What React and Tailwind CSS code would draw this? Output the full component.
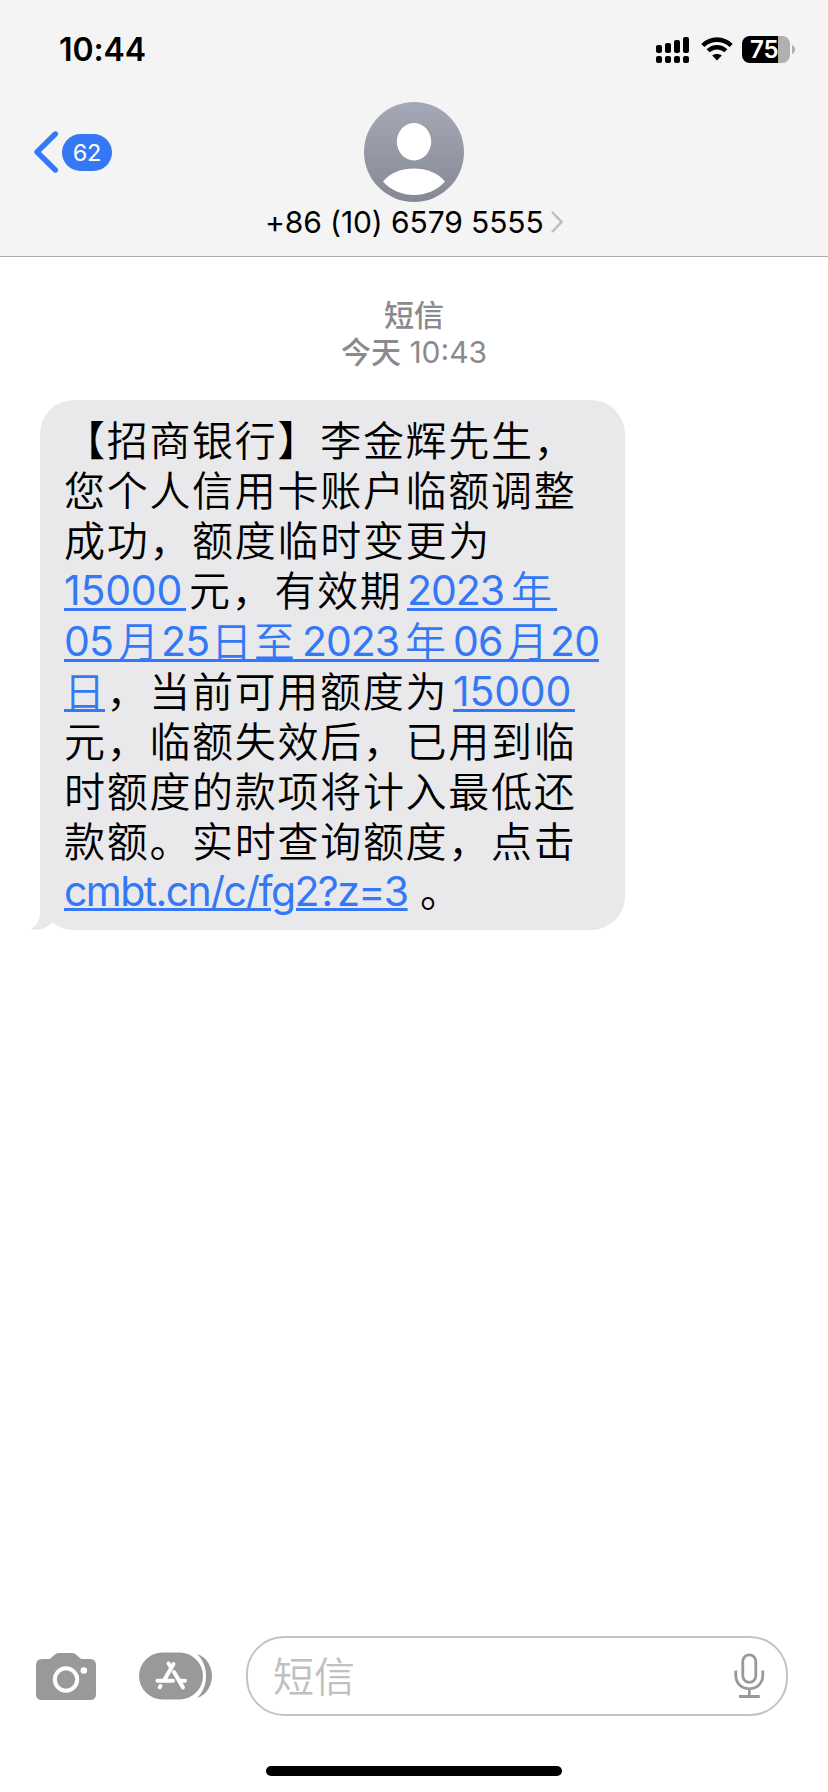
const latin = "font-['Inter','Noto_Sans_CJK_SC',sans-serif]";

function Line({ children }) {
  return <div className="flex h-[50.17px] whitespace-pre leading-[50px]">{children}</div>;
}

function Han({ className = "", children }) {
  return (
    <span
      className={`shrink-0 font-['Noto_Sans_CJK_SC_DemiLight','Noto_Sans_CJK_SC',sans-serif] text-[41px] leading-[46px] font-[350] tracking-[1.7px] ${className}`}
    >
      {children}
    </span>
  );
}

function Num({ className = "tracking-[-0.2px]", children }) {
  return <span className={`shrink-0 font-['Inter',sans-serif] text-[41px] ${className}`}>{children}</span>;
}

function Link({ className = "", children }) {
  return (
    <a className={`flex h-[46px] shrink-0 border-b-3 border-[#3478f6] text-[#3478f6] ${className}`}>{children}</a>
  );
}

function StatusBar() {
  return (
    <div className="flex h-[100px] items-start justify-between pt-[30px] pl-[59px] pr-[33px]">
      <span className="text-[32px] leading-[40px] font-semibold tracking-[-0.1px]">10:44</span>
      <div className="flex items-center pt-[6px]">
        <svg className="h-[27px] w-[34px]" viewBox="0 0 34 27">
          <rect x="0" y="9" width="6" height="8" rx="2" />
          <rect x="9" y="7" width="6" height="10" rx="2" />
          <rect x="18" y="4" width="6" height="13" rx="2" />
          <rect x="27" y="1" width="6" height="16" rx="2" />
          <rect x="0" y="20" width="6" height="7" rx="2" />
          <rect x="9" y="20" width="6" height="7" rx="2" />
          <rect x="18" y="20" width="6" height="7" rx="2" />
          <rect x="27" y="20" width="6" height="7" rx="2" />
        </svg>
        <svg className="ml-[11px] h-[27px] w-[32px]" viewBox="0 0 32 27">
          <path d="M0.3 7.9C9 -0.9 23 -0.9 31.7 7.9L28.6 11C21.5 4.2 10.5 4.2 3.4 11Z" />
          <path d="M5.6 13.2C11.4 7.5 20.6 7.5 26.4 13.2L23.3 16.3C19.2 12.4 12.8 12.4 8.7 16.3Z" />
          <path d="M11.2 19.500C13.9 17.500 18.1 17.500 20.8 19.500L16 24.500Z" />
        </svg>
        <div className="relative ml-[9px] flex h-[27px] w-[48px] overflow-hidden rounded-[8px] bg-[#b0b0b0]">
          <div className="h-full w-[36px] bg-black" />
          <span className="absolute top-0 left-[8px] text-[24px] leading-[27px] font-semibold text-white">75</span>
        </div>
        <svg className="ml-[2px] h-[9px] w-[3px]" viewBox="0 0 3 9">
          <path d="M0 0C4 1.500 4 7.500 0 9Z" fill="#b0b0b0" />
        </svg>
      </div>
    </div>
  );
}

function Header() {
  return (
    <header className="h-[257px] border-b border-[#adadad] bg-[#f4f4f4]">
      <StatusBar />
      <div className="grid grid-cols-[1fr_100px_1fr]">
        <div className="flex h-[104px] items-center pl-[33px]">
          <svg className="h-[44px] w-[26px]" viewBox="0 0 26 44" fill="none">
            <path d="M22.300 4L4 22L22.300 40" stroke="#3478f6" strokeWidth="5.400" strokeLinecap="round" strokeLinejoin="round" />
          </svg>
          <span className="ml-[3px] h-[37px] w-[50px] rounded-full bg-[#3478f6] text-center text-[23.500px] leading-[38px] tracking-[-0.2px] text-white">
            62
          </span>
        </div>
        <svg className="mt-[2px] size-[100px]" viewBox="0 0 100 100">
          <defs>
            <linearGradient id="avatar" x1="0" y1="0" x2="0" y2="1">
              <stop offset="0" stopColor="#a5a9b7" />
              <stop offset="1" stopColor="#858993" />
            </linearGradient>
          </defs>
          <circle cx="50" cy="50" r="50" fill="url(#avatar)" />
          <ellipse cx="50" cy="39.700" rx="17.200" ry="18.700" fill="#fff" />
          <path d="M19 79.500C33 62.200 67 62.200 81 79.500C65 97.500 35 97.500 19 79.500Z" fill="#fff" />
        </svg>
      </div>
      <div className="flex items-center pl-[265px]">
        <span className="w-[286px] text-[30px] leading-[36px] tracking-[-0.1px] whitespace-nowrap">+86 (10) 6579 5555</span>
        <svg className="h-[22px] w-[12px]" viewBox="0 0 12 22" fill="none">
          <path d="M1 1L10.500 11L1 21" stroke="#bcbcc0" strokeWidth="2.400" />
        </svg>
      </div>
    </header>
  );
}

function Message() {
  return (
    <div className="relative ml-[40px] h-[530px] w-[585px] rounded-[34px] bg-[#e9e9eb] pt-[15px] pl-[24px]">
      <svg className="absolute bottom-0 left-[-10px] h-[50px] w-[44px]" viewBox="0 0 44 50">
        <path d="M10 0V32C10 41 6 47 0 49C9 51.500 17 48 23 42.500C29 47.500 35 50 44 50V0Z" fill="#e9e9eb" />
        <path d="M0 50V49.500C9 51.500 17 48 23 42.500C29 47.500 35 50 44 50Z" fill="#fff" />
      </svg>
      <div className="relative">
        <Line><Han>【招商银行】李金辉先生，</Han></Line>
        <Line><Han>您个人信用卡账户临额调整</Han></Line>
        <Line><Han>成功，额度临时变更为</Han></Line>
        <Line>
          <Link className="w-[122px]"><Num>15000</Num></Link>
          <Han className="w-[221px] pl-[3px]">元，有效期</Han>
          <Link className="w-[150px]"><Num className="w-[104px] tracking-[-1px]">2023</Num><Han>年</Han></Link>
        </Line>
        <Line>
          <Link className="w-[535px]">
            <Num className="w-[54px] tracking-[-0.8px]">05</Num><Han className="w-[43px]">月</Han>
            <Num className="w-[50px] tracking-[-0.8px]">25</Num><Han className="w-[91px]">日至</Han>
            <Num className="w-[103px] tracking-[-1px]">2023</Num><Han className="w-[48px]">年</Han>
            <Num className="w-[54px] tracking-[-0.8px]">06</Num><Han className="w-[43px]">月</Han>
            <Num className="tracking-[-0.8px]">20</Num>
          </Link>
        </Line>
        <Line>
          <Link className="w-[41px]"><Han>日</Han></Link>
          <Han className="w-[348px] pl-[1.500px]">，当前可用额度为</Han>
          <Link className="w-[122px]"><Num>15000</Num></Link>
        </Line>
        <Line><Han>元，临额失效后，已用到临</Han></Line>
        <Line><Han>时额度的款项将计入最低还</Han></Line>
        <Line><Han>款额。实时查询额度，点击</Han></Line>
        <Line>
          <a className="w-[356px] shrink-0 font-['Inter',sans-serif] text-[41px] tracking-[-1.580px] text-[#3478f6] underline decoration-3 underline-offset-2">
            cmbt.cn/c/fg2?z=3
          </a>
          <Han>。</Han>
        </Line>
      </div>
    </div>
  );
}

function Composer() {
  return (
    <div className="flex h-[80px] items-center pl-[36px]">
      <svg className="h-[47px] w-[60px]" viewBox="0 0 60 47">
        <path d="M6 6H13C16 6 18 0 23 0H36C41 0 43 6 46 6H54Q60 6 60 12V41Q60 47 54 47H6Q0 47 0 41V12Q0 6 6 6Z" fill="#999" />
        <circle cx="30" cy="26.500" r="11.200" fill="none" stroke="#fff" strokeWidth="4" />
        <circle cx="47.800" cy="17.500" r="3.300" fill="#fff" />
      </svg>
      <svg className="ml-[43px] h-[48px] w-[73px]" viewBox="0 0 73 48" fill="none">
        <rect x="0" y="0.500" width="64" height="47" rx="23.500" fill="#999" />
        <path d="M58 2C78 9 78 39 58 46C70 35 70 13 58 2Z" fill="#999" />
        <g stroke="#fff" strokeWidth="4" strokeLinecap="round">
          <path d="M34.500 12L25 28.500M29.500 11.500L31.500 14.500M35 20L44 35.500M18.500 28.800H34M41.500 28.800H46M21.500 34L20.800 35.200" />
        </g>
      </svg>
      <div className="ml-[34px] flex h-[80px] w-[542px] items-center justify-between rounded-[38px] border-2 border-[#c4c4c6] pr-[21px] pl-[25px]">
        <span className="pb-[4px] font-['Noto_Sans_CJK_SC_DemiLight','Noto_Sans_CJK_SC',sans-serif] text-[41px] leading-[46px] font-[350] text-[#c0c0c2]">短信</span>
        <svg className="h-[46px] w-[31px]" viewBox="0 0 31 46" fill="none" stroke="#999" strokeWidth="2.800">
          <rect x="8.800" y="1.800" width="13" height="27.500" rx="6.500" />
          <path d="M1.800 17.500V22C1.800 30.500 7.500 35.800 15.300 35.800S28.800 30.500 28.800 22V17.500M15.300 36V43M5 43.500H25.800" />
        </svg>
      </div>
    </div>
  );
}

export default function App() {
  return (
    <div className={`flex h-[1792px] w-[828px] flex-col overflow-hidden bg-white text-black ${latin}`}>
      <Header />
      <div className="flex h-[143px] flex-col items-center pt-[40px] text-[30px] leading-[37px] text-[#8a8a8e]">
        <span className="font-medium">短信</span>
        <span><span className="font-medium">今天</span> 10:43</span>
      </div>
      <Message />
      <div className="flex-1" />
      <Composer />
      <div className="flex h-[76px] justify-center pt-[50px]">
        <div className="h-[10px] w-[296px] rounded-full bg-black" />
      </div>
    </div>
  );
}
